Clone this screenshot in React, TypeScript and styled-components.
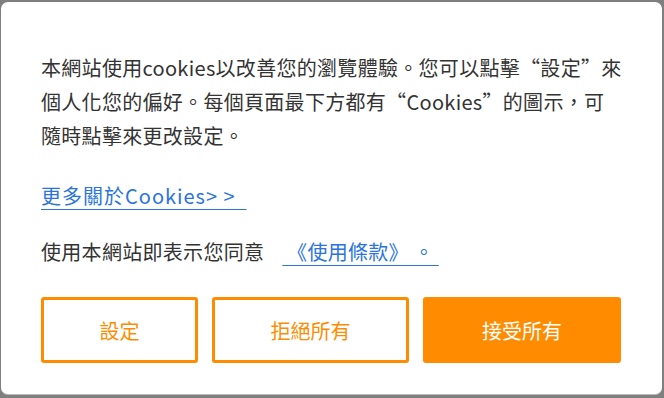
import styled, { createGlobalStyle } from "styled-components";

const GlobalStyle = createGlobalStyle`
  html, body {
    margin: 0;
    padding: 0;
    background: #7f7f7f;
  }
  body {
    font-family: "Noto Sans CJK TC", "Noto Sans", sans-serif;
  }
`;

const Backdrop = styled.div`
  width: 664px;
  height: 398px;
  box-sizing: border-box;
  padding: 2px 2px 4px 1px;
`;

const Dialog = styled.div`
  height: 100%;
  box-sizing: border-box;
  background: #fff;
  border-radius: 7px;
  padding: 49px 40px 0 40px;
  box-shadow: 0 1px 0 #bdbdbd;
  display: flex;
  flex-direction: column;
`;

const Paragraph = styled.p`
  margin: 0;
  font-size: 20px;
  line-height: 34px;
  color: #333;
  white-space: nowrap;
  letter-spacing: 0.3px;
`;

const MoreLink = styled.a`
  display: inline-block;
  margin-top: 26px;
  font-size: 20px;
  line-height: 34px;
  color: #2b74e0;
  text-decoration: underline;
  text-underline-offset: 5px;
  text-decoration-thickness: 1px;
  align-self: flex-start;
  letter-spacing: 1px;
`;

const Consent = styled(Paragraph)`
  margin-top: 22px;
`;

const TermsLink = styled.a`
  color: #2b74e0;
  text-decoration: underline;
  text-underline-offset: 5px;
  text-decoration-thickness: 1px;
  margin-left: 18px;
`;

const ButtonRow = styled.div`
  display: flex;
  gap: 14px;
  margin-top: 28px;
`;

const Button = styled.button<{ $w: number; $primary?: boolean }>`
  width: ${(p) => p.$w}px;
  height: 66px;
  box-sizing: border-box;
  border: 3px solid #ff8c00;
  border-radius: 3px;
  background: ${(p) => (p.$primary ? "#ff8c00" : "#fff")};
  color: ${(p) => (p.$primary ? "#fff" : "#ff8c00")};
  font-family: "Noto Sans CJK TC", "Noto Sans", sans-serif;
  font-size: 20px;
  cursor: pointer;
`;

const App = () => {
  return (
    <>
      <GlobalStyle />
      <Backdrop>
        <Dialog>
          <Paragraph>
            本網站使用cookies以改善您的瀏覽體驗。您可以點擊“設定”來
            <br />
            個人化您的偏好。每個頁面最下方都有“Cookies”的圖示，可
            <br />
            隨時點擊來更改設定。
          </Paragraph>
          <MoreLink href="#">更多關於Cookies&gt;&nbsp;&gt;&nbsp;&nbsp;</MoreLink>
          <Consent>
            使用本網站即表示您同意
            <TermsLink href="#">&nbsp;《使用條款》&nbsp;。&nbsp;</TermsLink>
          </Consent>
          <ButtonRow>
            <Button $w={157}>設定</Button>
            <Button $w={197}>拒絕所有</Button>
            <Button $w={198} $primary>
              接受所有
            </Button>
          </ButtonRow>
        </Dialog>
      </Backdrop>
    </>
  );
};

export default App;
